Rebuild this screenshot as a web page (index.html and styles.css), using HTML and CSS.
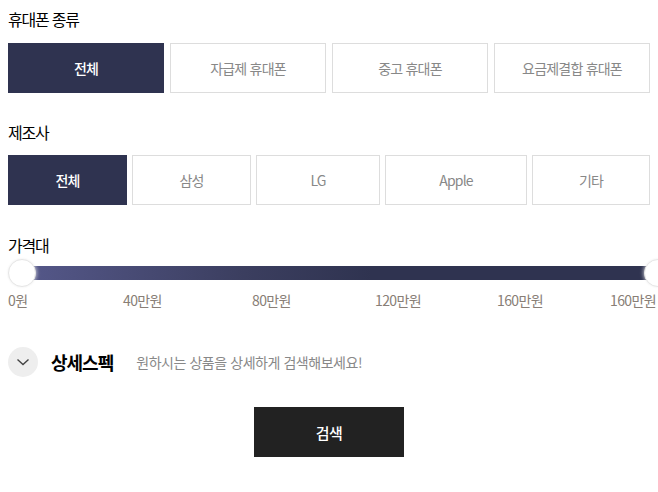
FILE: index.html
```html
<!DOCTYPE html>
<html lang="ko">

<head>
    <meta charset="UTF-8">
    <meta name="viewport" content="width=device-width, initial-scale=1.0">
    <title>휴대폰 검색</title>
    <link rel="stylesheet" href="styles.css">
</head>

<body>
    <div class="search-box">

        <!-- 휴대폰 종류 -->
        <div class="group">
            <div class="group-title">휴대폰 종류</div>
            <div class="options options-type">
                <button class="option active">전체</button>
                <button class="option">자급제 휴대폰</button>
                <button class="option">중고 휴대폰</button>
                <button class="option">요금제결합 휴대폰</button>
            </div>
        </div>

        <!-- 제조사 -->
        <div class="group">
            <div class="group-title">제조사</div>
            <div class="options options-maker">
                <button class="option active">전체</button>
                <button class="option">삼성</button>
                <button class="option">LG</button>
                <button class="option">Apple</button>
                <button class="option">기타</button>
            </div>
        </div>

        <!-- 가격대 -->
        <div class="group">
            <div class="group-title">가격대</div>
            <div class="range">
                <span class="thumb"></span>
                <div class="track"></div>
                <span class="thumb"></span>
            </div>
            <div class="range-labels">
                <span>0원</span>
                <span>40만원</span>
                <span>80만원</span>
                <span>120만원</span>
                <span>160만원</span>
                <span>160만원</span>
            </div>
        </div>

        <!-- 상세스펙 -->
        <div class="detail">
            <button class="detail-toggle">
                <svg width="14" height="8" viewBox="0 0 14 8">
                    <path d="M1.5 1.5 L7 6.5 L12.5 1.5" fill="none" stroke="#444" stroke-width="1.4" />
                </svg>
            </button>
            <span class="detail-title">상세스펙</span>
            <span class="detail-desc">원하시는 상품을 상세하게 검색해보세요!</span>
        </div>

        <div class="submit">
            <button class="btn-search">검색</button>
        </div>
    </div>
</body>

</html>
```

FILE: styles.css
```css
/* 휴대폰 검색 필터 */

body {
    font-family: "Noto Sans CJK KR", "Noto Sans", sans-serif;
    background-color: #fff;
    color: #111;
    margin: 0;
    padding: 0 8px;
    overflow: hidden;
}

.search-box {
    width: 642px;
}

.group-title {
    font-size: 16px;
    line-height: 20px;
    letter-spacing: -1.2px;
    color: #000;
}

.group:nth-child(1) .group-title {
    padding-top: 9px;
}

.group:nth-child(2) .group-title {
    padding-top: 29px;
}

.group:nth-child(3) .group-title {
    padding-top: 30px;
}

.options {
    display: grid;
    margin-top: 14px;
}

.options-type {
    grid-template-columns: repeat(4, 1fr);
    gap: 6px;
}

.options-maker {
    grid-template-columns: 119px 119px 124px 142px 1fr;
    gap: 5px;
    margin-top: 13px;
}

.option {
    height: 50px;
    background-color: #fff;
    border: 1px solid #ddd;
    color: #888;
    font-family: inherit;
    font-size: 14px;
    letter-spacing: -0.8px;
    padding: 0;
    cursor: pointer;
}

.option.active {
    background-color: #2f3350;
    border-color: #2f3350;
    color: #fff;
    font-weight: 500;
}

/* 가격 슬라이더 */

.range {
    display: flex;
    align-items: center;
    height: 28px;
    margin-top: 4px;
    margin-right: -22px;
}

.track {
    flex: 1;
    height: 14px;
    margin: 0 -14px;
    background: linear-gradient(to right, #55588a 0%, #3b3e5f 35%, #2f3350 55%, #2f3350 100%);
}

.thumb {
    position: relative;
    z-index: 1;
    width: 28px;
    height: 28px;
    flex: none;
    box-sizing: border-box;
    border-radius: 50%;
    background-color: #fff;
    border: 1px solid #e6e6e6;
    box-shadow: 0 0 4px rgba(255, 255, 255, 0.9), 0 0 2px rgba(0, 0, 0, 0.12);
}

.range-labels {
    display: grid;
    grid-template-columns: 115px 129px 123px 122px 113px auto;
    margin-top: 1px;
    font-size: 14px;
    line-height: 24px;
    letter-spacing: -0.6px;
    color: #887e76;
    white-space: nowrap;
}

/* 상세스펙 */

.detail {
    display: flex;
    align-items: center;
    margin-top: 35px;
    height: 30px;
}

.detail-toggle {
    width: 30px;
    height: 30px;
    border-radius: 50%;
    border: none;
    background-color: #eee;
    display: flex;
    align-items: center;
    justify-content: center;
    padding: 0;
    cursor: pointer;
}

.detail-title {
    margin-left: 13px;
    font-size: 18px;
    font-weight: 700;
    letter-spacing: -1px;
    color: #000;
}

.detail-desc {
    margin-left: 23px;
    font-size: 14px;
    letter-spacing: -0.45px;
    color: #888;
}

.submit {
    display: flex;
    justify-content: center;
    margin-top: 30px;
}

.btn-search {
    width: 150px;
    height: 50px;
    background-color: #222;
    color: #fff;
    border: none;
    font-family: inherit;
    font-size: 15px;
    font-weight: 500;
    letter-spacing: -0.5px;
    cursor: pointer;
}
```
